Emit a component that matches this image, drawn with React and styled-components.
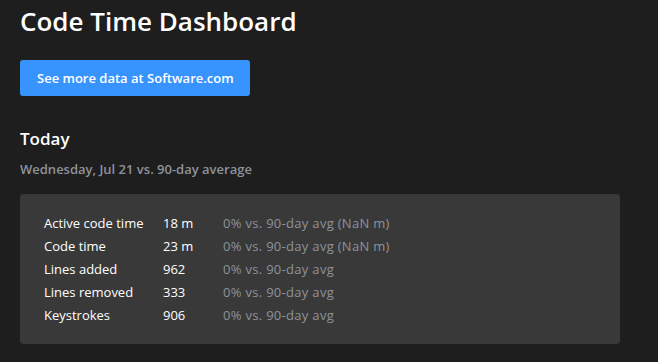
import styled, { createGlobalStyle } from "styled-components";

const Global = createGlobalStyle`
  html, body {
    margin: 0;
    padding: 0;
    background: #1e1e1e;
  }
  body {
    font-family: "Segoe UI", "Open Sans", "Noto Sans", sans-serif;
    color: #ffffff;
  }
`;

const Page = styled.div`
  padding: 0 20px;
  width: 600px;
`;

const Title = styled.h1`
  margin: 0;
  padding-top: 3px;
  font-size: 26px;
  font-weight: 600;
  line-height: 36px;
`;

const LinkButton = styled.a`
  display: inline-flex;
  align-items: center;
  margin-top: 21px;
  height: 36px;
  padding: 0 16px 0 17px;
  background: #3794ff;
  border-radius: 3px;
  color: #fff;
  font-size: 13px;
  font-weight: 600;
  text-decoration: none;
`;

const Heading = styled.h2`
  margin: 31px 0 0;
  font-size: 17px;
  font-weight: 600;
  line-height: 24px;
`;

const Sub = styled.div`
  margin-top: 9px;
  font-size: 13px;
  font-weight: 600;
  color: #8c939b;
  line-height: 18px;
`;

const Card = styled.div`
  margin-top: 16px;
  background: #393939;
  border-radius: 4px;
  padding: 18px 24px 17px;
  display: grid;
  grid-template-columns: 119px 60px 1fr;
`;

const Cell = styled.div`
  font-size: 13px;
  line-height: 23px;
  color: ${(p) => (p.$muted ? "#8c939b" : "#ffffff")};
  letter-spacing: ${(p) => (p.$muted ? "0.3px" : "0")};
  white-space: nowrap;
`;

const rows = [
  ["Active code time", "18 m", "0% vs. 90-day avg (NaN m)"],
  ["Code time", "23 m", "0% vs. 90-day avg (NaN m)"],
  ["Lines added", "962", "0% vs. 90-day avg"],
  ["Lines removed", "333", "0% vs. 90-day avg"],
  ["Keystrokes", "906", "0% vs. 90-day avg"],
];

export default function App() {
  return (
    <Page>
      <Global />
      <Title>Code Time Dashboard</Title>
      <LinkButton href="#">See more data at Software.com</LinkButton>
      <Heading>Today</Heading>
      <Sub>Wednesday, Jul 21 vs. 90-day average</Sub>
      <Card>
        {rows.map(([label, value, cmp]) => [
          <Cell key={label}>{label}</Cell>,
          <Cell key={label + "v"}>{value}</Cell>,
          <Cell key={label + "c"} $muted>
            {cmp}
          </Cell>,
        ])}
      </Card>
    </Page>
  );
}
